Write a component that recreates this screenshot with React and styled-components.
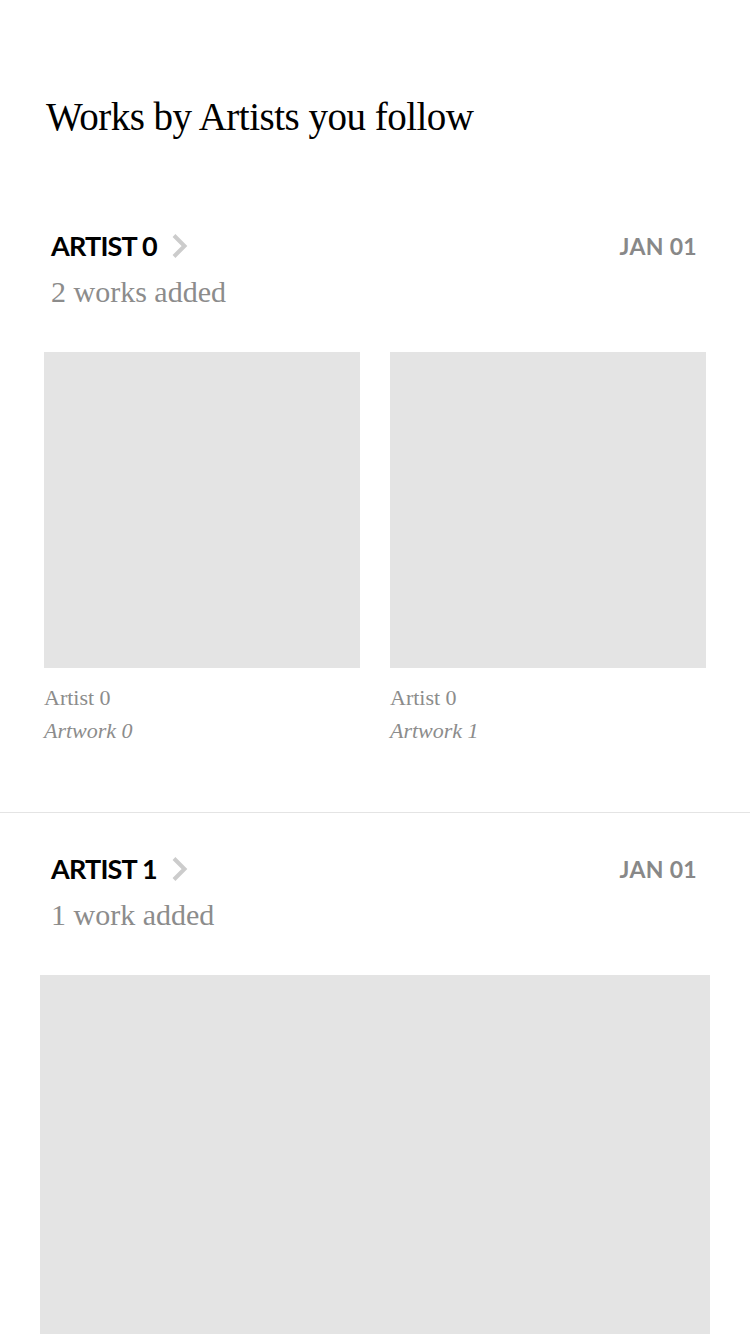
import React from "react";
import styled, { createGlobalStyle } from "styled-components";

const GlobalStyle = createGlobalStyle`
  html, body {
    margin: 0;
    padding: 0;
    background: #fff;
  }
  body {
    font-family: "Liberation Serif", serif;
    color: #000;
  }
  p, h1, h2 {
    margin: 0;
  }
`;

const Page = styled.div`
  width: 750px;
  height: 1334px;
  overflow: hidden;
  background: #fff;
`;

const Title = styled.h1`
  font-family: "Liberation Serif", serif;
  font-weight: normal;
  font-size: 39px;
  line-height: 48px;
  padding: 93px 0 0 46px;
  letter-spacing: -0.5px;
`;

const Section = styled.section`
  padding: ${p => p.$top}px 40px 64px;
  border-bottom: ${p => (p.$divider ? "1px solid #e4e4e4" : "none")};
`;

const Header = styled.div`
  display: flex;
  justify-content: space-between;
  align-items: flex-start;
  padding: 0 13px 0 11px;
  margin-bottom: 40px;
`;

const HeaderLeft = styled.div`
  display: flex;
  flex-direction: column;
`;

const ArtistLink = styled.div`
  display: flex;
  align-items: center;
  gap: 14px;
`;

const ArtistName = styled.h2`
  font-family: "Lato", sans-serif;
  font-weight: 700;
  font-size: 27px;
  line-height: 32px;
  letter-spacing: -0.8px;
  color: #000;
`;

const WorksAdded = styled.p`
  font-family: "Liberation Serif", serif;
  font-size: 30px;
  line-height: 40px;
  color: #8c8c8c;
  margin-top: 10px;
`;

const DateLabel = styled.span`
  font-family: "Lato", sans-serif;
  font-weight: 700;
  font-size: 23px;
  line-height: 32px;
  color: #888;
  letter-spacing: 0.3px;
`;

const Grid = styled.div`
  display: grid;
  grid-template-columns: repeat(${p => p.$cols}, 1fr);
  gap: 30px;
  padding: 0 ${p => (p.$cols > 1 ? 4 : 0)}px;
`;

const Artwork = styled.div`
  display: flex;
  flex-direction: column;
`;

const Thumb = styled.div`
  background: #e4e4e4;
  aspect-ratio: 1 / 1;
  margin-bottom: 14px;
`;

const CaptionArtist = styled.p`
  font-family: "Liberation Serif", serif;
  font-size: 22px;
  line-height: 32px;
  color: #8c8c8c;
`;

const CaptionTitle = styled.p`
  font-family: "Liberation Serif", serif;
  font-style: italic;
  font-size: 22px;
  line-height: 34px;
  color: #8c8c8c;
`;

const Chevron = () => (
  <svg width="18" height="26" viewBox="0 0 18 26">
    <path d="M3 2.5 L13.5 13 L3 23.5" fill="none" stroke="#cccccc" strokeWidth="4" />
  </svg>
);

const feed = [
  {
    artist: "Artist 0",
    date: "JAN 01",
    works: ["Artwork 0", "Artwork 1"],
  },
  {
    artist: "Artist 1",
    date: "JAN 01",
    works: ["Artwork 0"],
  },
];

const App = () => {
  return (
    <Page>
      <GlobalStyle />
      <Title>Works by Artists you follow</Title>
      {feed.map((item, idx) => (
        <Section key={idx} $top={idx === 0 ? 89 : 40} $divider={idx < feed.length - 1}>
          <Header>
            <HeaderLeft>
              <ArtistLink>
                <ArtistName>{item.artist.toUpperCase()}</ArtistName>
                <Chevron />
              </ArtistLink>
              <WorksAdded>
                {item.works.length} {item.works.length === 1 ? "work" : "works"} added
              </WorksAdded>
            </HeaderLeft>
            <DateLabel>{item.date}</DateLabel>
          </Header>
          <Grid $cols={item.works.length}>
            {item.works.map(work => (
              <Artwork key={work}>
                <Thumb />
                {item.works.length > 1 && (
                  <>
                    <CaptionArtist>{item.artist}</CaptionArtist>
                    <CaptionTitle>{work}</CaptionTitle>
                  </>
                )}
              </Artwork>
            ))}
          </Grid>
        </Section>
      ))}
    </Page>
  );
};

export default App;
